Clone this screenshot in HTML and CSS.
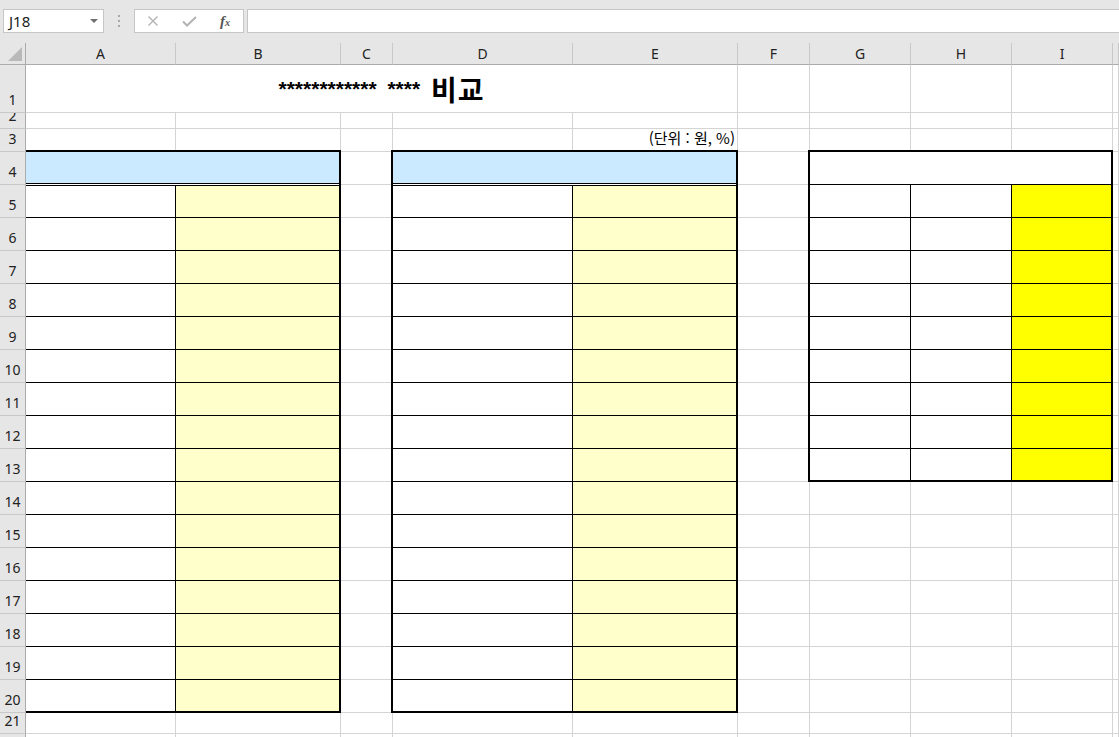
FILE: index.html
```html
<!DOCTYPE html>
<html lang="ko">
<head>
	<meta charset="UTF-8">
	<title>비교</title>
	<link rel="stylesheet" href="styles.css">
</head>
<body>
	<!-- 수식 입력줄 -->
	<div class="bar">
		<div class="namebox">
			<span>J18</span>
			<i class="arrow"></i>
		</div>
		<div class="dots"><i></i><i></i><i></i></div>
		<div class="fxbox">
			<span>
				<svg width="12" height="12" viewBox="0 0 12 12"><path d="M1.5 1.5L10.5 10.5M10.5 1.5L1.5 10.5" stroke="#b3b3b3" stroke-width="1.4" fill="none"/></svg>
			</span>
			<span>
				<svg width="15" height="12" viewBox="0 0 15 12"><path d="M1 6.5L5 10.5L14 2" stroke="#b3b3b3" stroke-width="2" fill="none"/></svg>
			</span>
			<span class="fx"><b>f</b><small>x</small></span>
		</div>
		<div class="formula"></div>
	</div>
	<!-- 시트 -->
	<div id="sheet">
		<div class="corner">
			<svg width="25" height="21" viewBox="0 0 25 21"><path d="M8 18L22 4V18Z" fill="#b9b9b9"/></svg>
		</div>
		<div class="colHead">A</div>
		<div class="colHead">B</div>
		<div class="colHead">C</div>
		<div class="colHead">D</div>
		<div class="colHead">E</div>
		<div class="colHead">F</div>
		<div class="colHead">G</div>
		<div class="colHead">H</div>
		<div class="colHead">I</div>
		<div class="colHead"></div>
		<div class="title"><span class="stars">************ **** </span><span class="ko">비교</span></div>
		<div class="unit">(단위 : 원, %)</div>
		<div class="tbl t1" id="t1"><div class="th"></div></div>
		<div class="tbl t2" id="t2"><div class="th"></div></div>
		<div class="tbl t3" id="t3"><div class="th"></div></div>
	</div>
	<script>
		(function (){
			var oSheet=document.querySelector("#sheet");
			//병합되거나 표로 덮인 칸
			function covered(r,c){
				if(r==1&&c<=5) return true;
				if(r==3&&c==5) return true;
				if(r>=4&&r<=20&&(c==1||c==2||c==4||c==5)) return true;
				if(r>=4&&r<=13&&c>=7&&c<=9) return true;
				return false;
			}
			for (var r = 1; r <= 22; r++) {
				var oHead=document.createElement("div");
				oHead.className="rowHead";
				oHead.innerHTML=r;
				oSheet.appendChild(oHead);
				for (var c = 1; c <= 10; c++) {
					if(covered(r,c)) continue;
					var oCell=document.createElement("div");
					oCell.className="cell";
					oSheet.appendChild(oCell);
				}
			}
			//표 채우기
			function fill(id,rows,n){
				var oTbl=document.querySelector(id);
				for (var i = 0; i < rows; i++) {
					for (var j = 0; j < n; j++) {
						var oTd=document.createElement("div");
						oTd.className="td"+(j==n-1?" y":"")+(i==rows-1?" last":"");
						oTbl.appendChild(oTd);
					}
				}
			}
			fill("#t1",16,2);
			fill("#t2",16,2);
			fill("#t3",9,3);
		})();
	</script>
</body>
</html>
```
FILE: styles.css
```css
html,
body{
	margin: 0;
	padding: 0;
	width: 100%;
	height: 100%;
	overflow: hidden;
	background-color: #e6e6e6;
	font-family: "Noto Sans", "Noto Sans CJK KR", sans-serif;
}
*{
	box-sizing: border-box;
}
.bar{
	height: 43px;
	padding: 9px 0 0 3px;
	display: flex;
	align-items: flex-start;
}
.namebox{
	width: 101px;
	height: 24px;
	border: 1px solid #c6c6c6;
	background-color: #fff;
	display: flex;
	align-items: center;
	justify-content: space-between;
	padding: 0 5px 0 5px;
	font-size: 15px;
	color: #222;
}
.arrow{
	width: 0;
	height: 0;
	border-left: 4px solid transparent;
	border-right: 4px solid transparent;
	border-top: 4px solid #707070;
}
.dots{
	width: 30px;
	height: 24px;
	display: flex;
	flex-direction: column;
	align-items: center;
	justify-content: center;
	gap: 3px;
}
.dots i{
	display: block;
	width: 2px;
	height: 2px;
	background-color: #a9a9a9;
}
.fxbox{
	width: 110px;
	height: 24px;
	border: 1px solid #c6c6c6;
	background-color: #fff;
	display: flex;
}
.fxbox span{
	width: 36px;
	display: flex;
	align-items: center;
	justify-content: center;
}
.fx{
	font-family: "Liberation Serif", serif;
	font-style: italic;
	color: #555;
}
.fx b{
	font-size: 15px;
}
.fx small{
	font-size: 10px;
	font-weight: bold;
	margin-top: 3px;
}
.formula{
	flex: 1;
	height: 24px;
	margin-left: 3px;
	border: 1px solid #c6c6c6;
	border-right: 0;
	background-color: #fff;
}
#sheet{
	display: grid;
	grid-template-columns: 26px 150px 165px 52px 180px 165px 72px 101px 101px 101px 1fr;
	grid-template-rows: 22px 48px 16px 23px repeat(17, 33px) 21px 33px;
	background-color: #fff;
}
.corner{
	background-color: #e6e6e6;
	border-right: 1px solid #ababab;
	border-bottom: 1px solid #ababab;
	z-index: 2;
}
.corner svg{
	display: block;
}
.colHead{
	background-color: #e6e6e6;
	border-right: 1px solid #c8c8c8;
	border-bottom: 1px solid #ababab;
	display: flex;
	align-items: center;
	justify-content: center;
	font-size: 14px;
	color: #222;
}
.rowHead{
	background-color: #e6e6e6;
	border-right: 1px solid #ababab;
	border-bottom: 1px solid #c8c8c8;
	display: flex;
	align-items: flex-end;
	justify-content: center;
	padding-bottom: 4px;
	font-size: 14px;
	line-height: 16px;
	color: #222;
	overflow: hidden;
	z-index: 2;
}
.cell{
	border-right: 1px solid #d4d4d4;
	border-bottom: 1px solid #d4d4d4;
}
.title{
	grid-row: 2;
	grid-column: 2 / 7;
	background-color: #fff;
	border-right: 1px solid #d4d4d4;
	border-bottom: 1px solid #d4d4d4;
	display: flex;
	align-items: flex-end;
	justify-content: center;
	padding-bottom: 8px;
	font-weight: bold;
	line-height: 30px;
	color: #000;
	white-space: pre;
}
.stars{
	font-family: "Liberation Sans", sans-serif;
	font-size: 21px;
	word-spacing: 5px;
}
.ko{
	font-family: "Noto Sans CJK KR", sans-serif;
	font-size: 28px;
	letter-spacing: 1px;
}
.unit{
	grid-row: 4;
	grid-column: 6;
	border-right: 1px solid #d4d4d4;
	border-bottom: 1px solid #d4d4d4;
	display: flex;
	align-items: flex-end;
	justify-content: flex-end;
	padding: 0 2px 5px 0;
	font-family: "Noto Sans CJK KR", sans-serif;
	font-size: 15px;
	line-height: 16px;
	color: #000;
}
.tbl{
	z-index: 1;
	margin: -2px 0 0 -2px;
	border: 2px solid #000;
	display: grid;
	background-color: #fff;
}
.t1,
.t2{
	grid-row: 5 / 22;
	grid-template-rows: 34px 32px repeat(14, 33px) 1fr;
}
.t1{
	grid-column: 2 / 4;
	grid-template-columns: 150px 1fr;
}
.t2{
	grid-column: 5 / 7;
	grid-template-columns: 180px 1fr;
}
.t3{
	grid-row: 5 / 15;
	grid-column: 8 / 11;
	grid-template-columns: 101px 101px 1fr;
	grid-template-rows: repeat(9, 33px) 1fr;
}
.th{
	grid-column: 1 / -1;
}
.t1 .th,
.t2 .th{
	background-color: #cceaff;
	background-clip: padding-box;
	border-bottom: 3px double #000;
}
.t3 .th{
	border-bottom: 1px solid #000;
}
.td{
	border-right: 1px solid #000;
	border-bottom: 1px solid #000;
}
.td.y{
	border-right: 0;
	background-color: #ffffcc;
}
.t3 .td.y{
	background-color: #ffff00;
}
.td.last{
	border-bottom: 0;
}
```
